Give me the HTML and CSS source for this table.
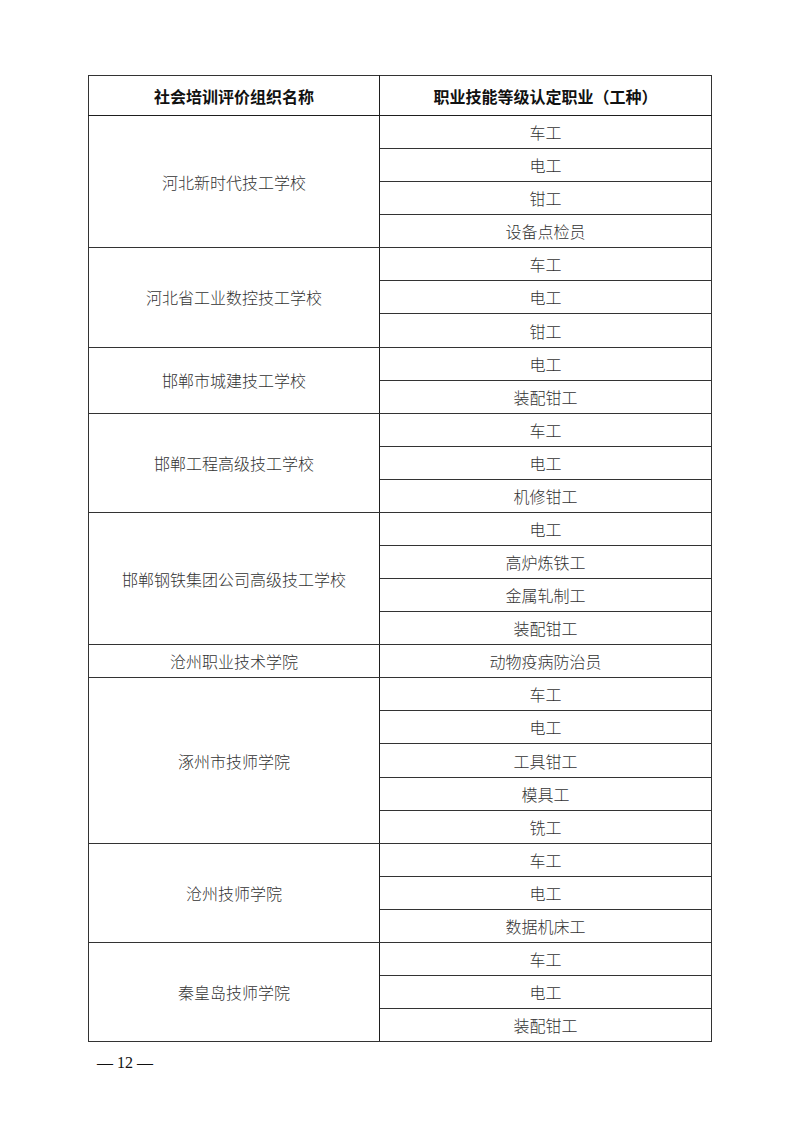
FILE: index.html
```html
<!DOCTYPE html>
<html lang="zh-CN">
<head>
<meta charset="utf-8">
<link rel="stylesheet" href="styles.css">
</head>
<body>
<div class="page">
<table class="grid">
<colgroup><col class="c1"><col class="c2"></colgroup>
<thead>
<tr class="head"><th>社会培训评价组织名称</th><th>职业技能等级认定职业（工种）</th></tr>
</thead>
<tbody>
<tr><td rowspan="4">河北新时代技工学校</td><td>车工</td></tr>
<tr><td>电工</td></tr>
<tr><td>钳工</td></tr>
<tr><td>设备点检员</td></tr>
<tr><td rowspan="3">河北省工业数控技工学校</td><td>车工</td></tr>
<tr><td>电工</td></tr>
<tr><td>钳工</td></tr>
<tr><td rowspan="2">邯郸市城建技工学校</td><td>电工</td></tr>
<tr><td>装配钳工</td></tr>
<tr><td rowspan="3">邯郸工程高级技工学校</td><td>车工</td></tr>
<tr><td>电工</td></tr>
<tr><td>机修钳工</td></tr>
<tr><td rowspan="4">邯郸钢铁集团公司高级技工学校</td><td>电工</td></tr>
<tr><td>高炉炼铁工</td></tr>
<tr><td>金属轧制工</td></tr>
<tr><td>装配钳工</td></tr>
<tr><td>沧州职业技术学院</td><td>动物疫病防治员</td></tr>
<tr><td rowspan="5">涿州市技师学院</td><td>车工</td></tr>
<tr><td>电工</td></tr>
<tr><td>工具钳工</td></tr>
<tr><td>模具工</td></tr>
<tr><td>铣工</td></tr>
<tr><td rowspan="3">沧州技师学院</td><td>车工</td></tr>
<tr><td>电工</td></tr>
<tr><td>数据机床工</td></tr>
<tr><td rowspan="3">秦皇岛技师学院</td><td>车工</td></tr>
<tr><td>电工</td></tr>
<tr><td>装配钳工</td></tr>
</tbody>
</table>
<div class="pageno">— 12 —</div>
</div>
</body>
</html>
```
FILE: styles.css
```css
html, body {
  margin: 0;
  padding: 0;
  background: #fff;
}
.page {
  width: 800px;
  height: 1131px;
  box-sizing: border-box;
  padding: 75px 0 0 88px;
}
.grid {
  border-collapse: collapse;
  width: 623px;
  table-layout: fixed;
  border: 1.5px solid #1e1e1e;
  font-family: "Noto Sans CJK SC", sans-serif;
  font-size: 16px;
}
.c1 { width: 291px; }
.c2 { width: 332px; }
.grid th, .grid td {
  border: 1px solid #333;
  text-align: center;
  vertical-align: middle;
  padding: 0;
  line-height: 20px;
}
.grid td[rowspan], .grid tr > td:first-child:not(:only-child) {
  border-right: 1.5px solid #1e1e1e;
}
.grid th {
  height: 39px;
  font-weight: 700;
  color: #111;
  border-bottom: 1.5px solid #1e1e1e;
}
.grid th:first-child {
  border-right: 1.5px solid #1e1e1e;
}
.grid td {
  height: 32.08px;
  font-weight: 300;
  color: #333;
}
.pageno {
  margin: 12px 0 0 9px;
  font-family: "Liberation Serif", serif;
  font-size: 16px;
  color: #111;
  line-height: 18px;
}
```
